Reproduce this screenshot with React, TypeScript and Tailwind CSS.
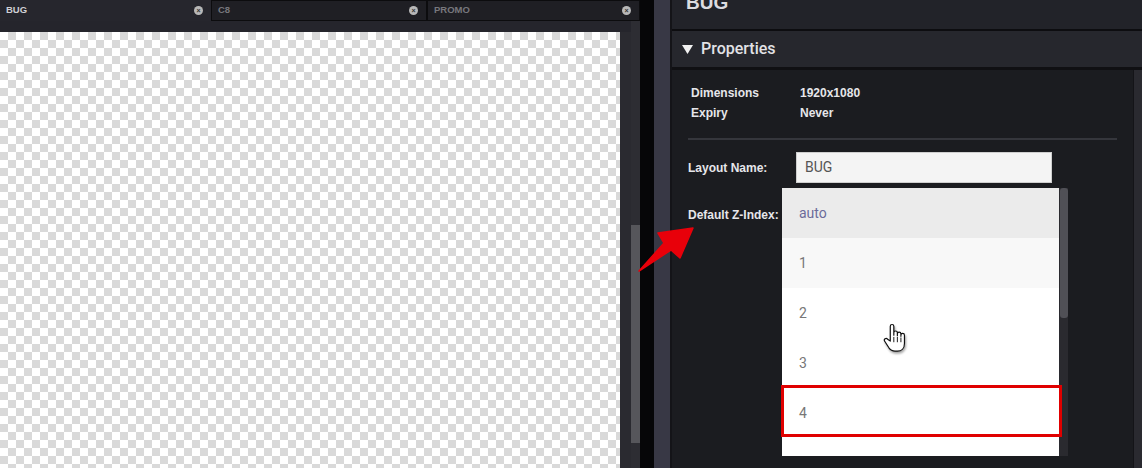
import React from "react";

const Close = () => (
  <span className="flex h-[9px] w-[9px] items-center justify-center rounded-full bg-[#b8b8b8]">
    <span className="text-[7px] leading-none font-bold text-[#333]">×</span>
  </span>
);

const Tab = ({ label, w, active }: { label: string; w: string; active?: boolean }) => (
  <div
    className={`${w} flex h-[21px] items-center justify-between pl-[6px] pr-[8px] ${
      active ? "bg-[#26262d]" : "border border-[#0c0c0e] bg-[#1f1f24]"
    }`}
  >
    <span className={`text-[9.5px] font-bold ${active ? "text-[#cfcfd4]" : "text-[#77777d]"}`}>{label}</span>
    <Close />
  </div>
);

const Hand = () => (
  <svg width="26" height="31" viewBox="0 0 22 26" className="drop-shadow-[1px_2px_1px_rgba(0,0,0,0.35)]">
    <path
      d="M7 16V3.5a1.5 1.5 0 0 1 3 0V11V9a1.5 1.5 0 0 1 3 0v2.5V10a1.5 1.5 0 0 1 3 0v2v-1a1.5 1.5 0 0 1 3 0v7c0 4-2.5 6.5-6 6.5h-2c-2.5 0-4-1.2-5.3-3L2.3 16.2a1.5 1.5 0 0 1 2.4-1.8L7 16Z"
      fill="#fff"
      stroke="#111"
      strokeWidth="1"
      strokeLinejoin="round"
    />
    <path d="M10 12.5v4.5M13 12.5v4.5M16 13v4" stroke="#111" strokeWidth="0.8" />
  </svg>
);

export default function App() {
  const rows = ["auto", "1", "2", "3", "4"];
  return (
    <div
      className="relative flex h-[468px] w-[1142px] overflow-hidden bg-[#1b1c20]"
      style={{ fontFamily: '"Liberation Sans", Arial, sans-serif' }}
    >
      {/* Left column */}
      <div className="flex w-[640px] flex-col bg-[#25252c]">
        <div className="flex h-[21px] bg-[#26262d]">
          <Tab label="BUG" w="w-[211px]" active />
          <Tab label="C8" w="w-[216px]" />
          <Tab label="PROMO" w="w-[213px]" />
        </div>
        <div className="flex flex-1 pt-[11px]">
          <div className="w-[620px] bg-white bg-[conic-gradient(#d9d9d9_25%,#ffffff_0_50%,#d9d9d9_0_75%,#ffffff_0)] bg-[length:16px_16px]" />
          <div className="w-[11px] bg-[#2a2a30]" />
          <div className="-mt-[11px] flex w-[9px] flex-col bg-[#2d2d33] pt-[204px]">
            <div className="h-[218px] bg-[#56565b]" />
          </div>
        </div>
      </div>
      <div className="w-[14px] bg-[#060608]" />
      <div className="w-[16px] bg-[#383845]" />
      <div className="w-[2px] bg-[#141418]" />

      {/* Right panel */}
      <div className="flex flex-1 flex-col">
        <div className="relative h-[29px] bg-[#222329]">
          <span className="absolute left-[14px] top-[-11px] text-[19px] font-bold text-[#dcdce0]">BUG</span>
        </div>
        <div className="h-[2px] bg-[#0d0d10]" />
        <div className="flex h-[36px] items-center gap-[8px] bg-[#26272d] pl-[10px]">
          <svg width="11" height="9" viewBox="0 0 11 9">
            <path d="M0 0h11L5.5 9Z" fill="#f2f2f2" />
          </svg>
          <span className="text-[16px] font-medium text-[#e2e2e6]" style={{ fontFamily: "Roboto, sans-serif" }}>
            Properties
          </span>
        </div>
        <div className="h-[3px] bg-[#101013]" />
        <div className="flex flex-1">
          <div className="flex-1 pl-[16px] pr-[16px] pt-[13px]">
            <div className="pl-[3px] text-[12px] font-bold text-[#e6e6ea]">
              <div className="flex h-[20px] items-center">
                <span className="w-[109px]">Dimensions</span>
                <span>1920x1080</span>
              </div>
              <div className="flex h-[20px] items-center">
                <span className="w-[109px]">Expiry</span>
                <span>Never</span>
              </div>
            </div>
            <div className="mt-[15px] h-[2px] w-[429px] bg-[#35363c]" />
            <div className="mt-[12px] flex items-center">
              <span className="w-[108px] text-[12px] font-bold text-[#e6e6ea]">Layout Name:</span>
              <div className="flex h-[31px] w-[256px] items-center border border-[#cfcfcf] bg-[#f4f4f4] pl-[8px]">
                <span className="text-[14px] text-[#555]" style={{ fontFamily: "Roboto, sans-serif" }}>
                  BUG
                </span>
              </div>
            </div>
            <div className="mt-[16px] flex h-[31px] items-center">
              <span className="text-[12px] font-bold text-[#e6e6ea]">Default Z-Index:</span>
            </div>
          </div>
          <div className="w-[9px] border-l border-[#141418] bg-[#2a2a30]" />
        </div>
      </div>

      {/* Dropdown overlay */}
      <div className="absolute left-[782px] top-[188px] flex h-[268px] w-[286px]">
        <div className="w-[277px] bg-white" style={{ fontFamily: "Roboto, sans-serif" }}>
          {rows.map((r, i) => (
            <div
              key={r}
              className={`flex h-[50px] items-center pl-[17px] text-[14px] ${
                i === 0 ? "bg-[#ebebeb] text-[#6b6b9a]" : i === 1 ? "bg-[#f8f8f8] text-[#777]" : "bg-white text-[#777]"
              }`}
            >
              {r}
            </div>
          ))}
        </div>
        <div className="flex w-[9px] flex-col bg-[#2a2a2f] pl-[1px]">
          <div className="h-[130px] rounded-[3px] bg-[#505056]" />
        </div>
      </div>

      {/* Highlight box */}
      <div className="absolute left-[781px] top-[385px] h-[52px] w-[281px] border-[3px] border-[#e00000]" />

      {/* Red arrow */}
      <svg className="absolute left-0 top-0" width="1142" height="468" viewBox="0 0 1142 468">
        <path d="M639 271L664 243L658 233L693 228L680 258L671 250Z" fill="#e8000a" stroke="#e8000a" strokeWidth="1.5" strokeLinejoin="round" />
      </svg>

      {/* Hand cursor */}
      <div className="absolute left-[882px] top-[322px]">
        <Hand />
      </div>
    </div>
  );
}
